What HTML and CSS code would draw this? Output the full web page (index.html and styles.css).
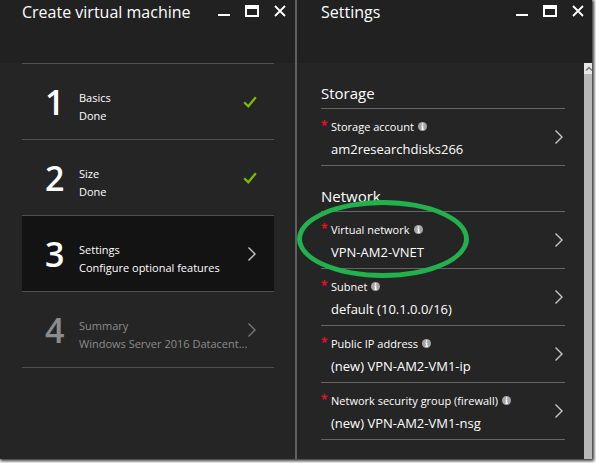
FILE: index.html
```html
<!DOCTYPE html>
<html lang="en">
<head>
<meta charset="utf-8">
<title>Create virtual machine</title>
<link rel="stylesheet" href="styles.css">
</head>
<body>
<svg class="defs" width="0" height="0" aria-hidden="true">
  <symbol id="minimize" viewBox="0 0 14 14"><path d="M1 11h12" fill="none" stroke="currentColor" stroke-width="2"/></symbol>
  <symbol id="maximize" viewBox="0 0 14 14"><path fill="currentColor" fill-rule="evenodd" d="M0 1h14v12H0zM2 5v6h10V5z"/></symbol>
  <symbol id="close" viewBox="0 0 14 14"><path d="M2 2l10 10M12 2L2 12" fill="none" stroke="currentColor" stroke-width="1.800"/></symbol>
  <symbol id="chevron" viewBox="0 0 10 16"><path d="M1.500 1.500L8 8l-6.500 6.500" fill="none" stroke="currentColor" stroke-width="1.400"/></symbol>
  <symbol id="check" viewBox="0 0 14 12"><path d="M1.200 6.200L5.300 10.200L12.800 1.200" fill="none" stroke="currentColor" stroke-width="2.300"/></symbol>
  <symbol id="info" viewBox="0 0 8 8"><circle cx="4" cy="4" r="4" fill="#a6a6a6"/><path d="M3.400 1.200h1.300v1.200H3.400zM3 3.200h1.700v2.800h.6v.8H2.900V6h.5V4H3z" fill="#fff"/></symbol>
</svg>
<div class="portal">
  <section class="blade steps-blade">
    <header class="blade-header">
      <h1>Create virtual machine</h1>
      <div class="controls">
        <button type="button" aria-label="Minimize"><svg><use href="#minimize"/></svg></button>
        <button type="button" aria-label="Maximize"><svg><use href="#maximize"/></svg></button>
        <button type="button" aria-label="Close"><svg><use href="#close"/></svg></button>
      </div>
    </header>
    <div class="steps">
      <button type="button" class="step"><span class="number">1</span><span class="step-text"><span>Basics</span><span>Done</span></span><svg class="check"><use href="#check"/></svg></button>
      <button type="button" class="step"><span class="number">2</span><span class="step-text"><span>Size</span><span>Done</span></span><svg class="check"><use href="#check"/></svg></button>
      <button type="button" class="step current"><span class="number">3</span><span class="step-text"><span>Settings</span><span>Configure optional features</span></span><svg class="chevron"><use href="#chevron"/></svg></button>
      <button type="button" class="step pending"><span class="number">4</span><span class="step-text"><span>Summary</span><span>Windows Server 2016 Datacent...</span></span><svg class="chevron"><use href="#chevron"/></svg></button>
    </div>
  </section>
  <section class="blade settings-blade">
    <header class="blade-header">
      <h1>Settings</h1>
      <div class="controls">
        <button type="button" aria-label="Minimize"><svg><use href="#minimize"/></svg></button>
        <button type="button" aria-label="Maximize"><svg><use href="#maximize"/></svg></button>
        <button type="button" aria-label="Close"><svg><use href="#close"/></svg></button>
      </div>
    </header>
    <div class="scroll-area">
      <div class="settings">
        <h2>Storage</h2>
        <button type="button" class="field"><span class="required">*</span><span class="field-text"><span class="label">Storage account <svg class="info"><use href="#info"/></svg></span><span class="value">am2researchdisks266</span></span><svg class="chevron"><use href="#chevron"/></svg></button>
        <h2>Network</h2>
        <div class="marked">
          <button type="button" class="field"><span class="required">*</span><span class="field-text"><span class="label">Virtual network <svg class="info"><use href="#info"/></svg></span><span class="value">VPN-AM2-VNET</span></span><svg class="chevron"><use href="#chevron"/></svg></button>
          <span class="marker"></span>
        </div>
        <button type="button" class="field"><span class="required">*</span><span class="field-text"><span class="label">Subnet <svg class="info"><use href="#info"/></svg></span><span class="value">default (10.1.0.0/16)</span></span><svg class="chevron"><use href="#chevron"/></svg></button>
        <button type="button" class="field"><span class="required">*</span><span class="field-text"><span class="label">Public IP address <svg class="info"><use href="#info"/></svg></span><span class="value">(new) VPN-AM2-VM1-ip</span></span><svg class="chevron"><use href="#chevron"/></svg></button>
        <button type="button" class="field"><span class="required">*</span><span class="field-text"><span class="label">Network security group (firewall) <svg class="info"><use href="#info"/></svg></span><span class="value">(new) VPN-AM2-VM1-nsg</span></span><svg class="chevron"><use href="#chevron"/></svg></button>
      </div>
      <div class="scrollbar"><span class="scroll-up"><svg viewBox="0 0 8 8"><path d="M2 5.500L5 2.500L8 5.500" fill="none" stroke="#777" stroke-width="1.500"/></svg></span></div>
    </div>
  </section>
</div>
</body>
</html>
```
FILE: styles.css
```css
* { box-sizing: border-box; }

body {
  margin: 0;
  min-height: 100vh;
  padding: 0 4px 4px 0;
  display: flex;
  background: #fff;
  color: #fff;
  font-family: "Open Sans", "Noto Sans", sans-serif;
}

.defs { position: absolute; }
svg { display: block; flex: none; }

button {
  padding: 0;
  border: 0;
  background: none;
  color: inherit;
  font: inherit;
  text-align: left;
}

.portal {
  flex: 1;
  display: flex;
  background: #252525;
  box-shadow: 1px 1px 3px 1px #333;
}

.blade {
  flex: 1;
  min-width: 0;
  display: flex;
  flex-direction: column;
}

.steps-blade { border-right: 2px solid #606060; }

.blade-header {
  height: 63px;
  padding-left: 22px;
  display: flex;
  justify-content: space-between;
  align-items: flex-start;
  background: #212121;
}

.steps-blade .blade-header { padding-right: 1px; }
.settings-blade .blade-header { padding-left: 24px; }

h1, h2 { margin: 0; font-weight: 400; }

h1 { font-size: 16px; line-height: 24px; }

h2 {
  padding: 18px 0 3px;
  border-bottom: 1px solid #666;
  font-size: 15px;
  line-height: 24px;
}

.controls { display: flex; }

.controls button {
  width: 28px;
  height: 22px;
  display: grid;
  place-items: center;
}

.controls svg { width: 14px; height: 14px; }

.steps {
  margin: 0 21px 0 22px;
  border-top: 1px solid #505050;
}

.step {
  width: 100%;
  height: 76px;
  padding: 0 17px 0 23px;
  border-bottom: 1px solid #505050;
  display: flex;
  align-items: center;
}

.number {
  width: 34px;
  font-size: 34px;
  line-height: 40px;
  font-weight: 600;
}

.step-text {
  flex: 1;
  min-width: 0;
  padding-top: 10px;
  display: grid;
  font-size: 11px;
  line-height: 18px;
  white-space: nowrap;
}

.check { width: 14px; height: 12px; color: #7fba00; }
.chevron { width: 10px; height: 16px; color: #c8c8c8; }

.current { background: #131313; }
.pending { color: #8c8c8c; }
.pending .chevron { color: #777; }

.scroll-area { flex: 1; display: flex; }

.settings {
  flex: 1;
  min-width: 0;
  padding: 0 19px 0 24px;
}

.field {
  width: 100%;
  height: 57px;
  border-bottom: 1px solid #666;
  padding-right: 1px;
  display: flex;
  align-items: center;
}

.required {
  width: 10px;
  align-self: flex-start;
  padding-top: 8px;
  color: #e81123;
  font-size: 12px;
  line-height: 18px;
  font-weight: 700;
}

.field-text { flex: 1; display: grid; gap: 3px; padding-top: 2px; }

.label {
  display: flex;
  align-items: center;
  gap: 4px;
  font-size: 11px;
  line-height: 18px;
}

.value { font-size: 13px; line-height: 20px; }

.info { width: 9px; height: 9px; }

.marked { position: relative; }

.marker {
  position: absolute;
  left: -24px;
  top: -12px;
  width: 172px;
  height: 78px;
  border: 5px solid #22b14c;
  border-radius: 50%;
  pointer-events: none;
}

.scrollbar { width: 8px; background: #b8b8b8; }

.scroll-up {
  height: 11px;
  display: grid;
  place-items: center;
  background: #e6e6e6;
}

.scroll-up svg { width: 8px; height: 8px; }
```
